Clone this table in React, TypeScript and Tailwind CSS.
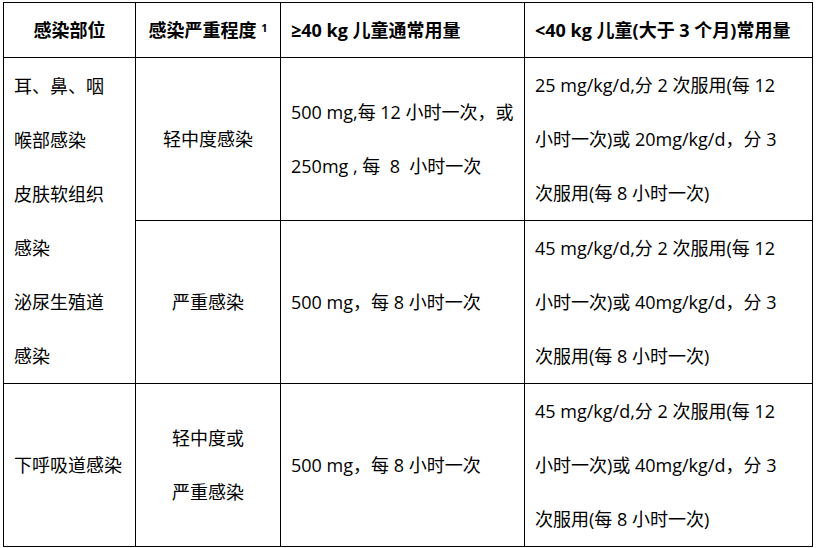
const font = { fontFamily: '"Open Sans", "Noto Sans CJK SC", sans-serif' };

function Th({ children, center }: { children: React.ReactNode; center?: boolean }) {
  return (
    <th
      className={`border border-black px-[10px] py-0 align-middle text-[18px] font-bold leading-[24px] text-black ${
        center ? "text-center" : "text-left"
      }`}
    >
      {children}
    </th>
  );
}

function Td({
  children,
  center,
  rowSpan,
}: {
  children: React.ReactNode;
  center?: boolean;
  rowSpan?: number;
}) {
  return (
    <td
      rowSpan={rowSpan}
      className={`border border-black px-[10px] py-0 align-middle text-[18px] leading-[54px] text-black ${
        center ? "text-center" : "text-left"
      }`}
    >
      {children}
    </td>
  );
}

export default function App() {
  return (
    <div className="min-h-[548px] w-[817px] bg-white pl-[3px] pt-[2px]" style={font}>
      <table className="w-[810px] table-fixed border-collapse">
        <colgroup>
          <col className="w-[132px]" />
          <col className="w-[145px]" />
          <col className="w-[244px]" />
          <col className="w-[288px]" />
        </colgroup>
        <thead>
          <tr className="h-[55px]">
            <Th center>感染部位</Th>
            <Th center>
              感染严重程度 <sup className="text-[11px] font-bold">1</sup>
            </Th>
            <Th>≥40 kg 儿童通常用量</Th>
            <Th>&lt;40 kg 儿童(大于 3 个月)常用量</Th>
          </tr>
        </thead>
        <tbody>
          <tr className="h-[163px]">
            <Td rowSpan={2}>
              耳、鼻、咽
              <br />
              喉部感染
              <br />
              皮肤软组织
              <br />
              感染
              <br />
              泌尿生殖道
              <br />
              感染
            </Td>
            <Td center>轻中度感染</Td>
            <Td>
              500 mg,每 12 小时一次，或
              <br />
              250mg , 每&nbsp; 8&nbsp; 小时一次
            </Td>
            <Td>
              25 mg/kg/d,分 2 次服用(每 12
              <br />
              小时一次)或 20mg/kg/d，分 3
              <br />
              次服用(每 8 小时一次)
            </Td>
          </tr>
          <tr className="h-[163px]">
            <Td center>严重感染</Td>
            <Td>500 mg，每 8 小时一次</Td>
            <Td>
              45 mg/kg/d,分 2 次服用(每 12
              <br />
              小时一次)或 40mg/kg/d，分 3
              <br />
              次服用(每 8 小时一次)
            </Td>
          </tr>
          <tr className="h-[163px]">
            <Td>下呼吸道感染</Td>
            <Td center>
              轻中度或
              <br />
              严重感染
            </Td>
            <Td>500 mg，每 8 小时一次</Td>
            <Td>
              45 mg/kg/d,分 2 次服用(每 12
              <br />
              小时一次)或 40mg/kg/d，分 3
              <br />
              次服用(每 8 小时一次)
            </Td>
          </tr>
        </tbody>
      </table>
    </div>
  );
}
